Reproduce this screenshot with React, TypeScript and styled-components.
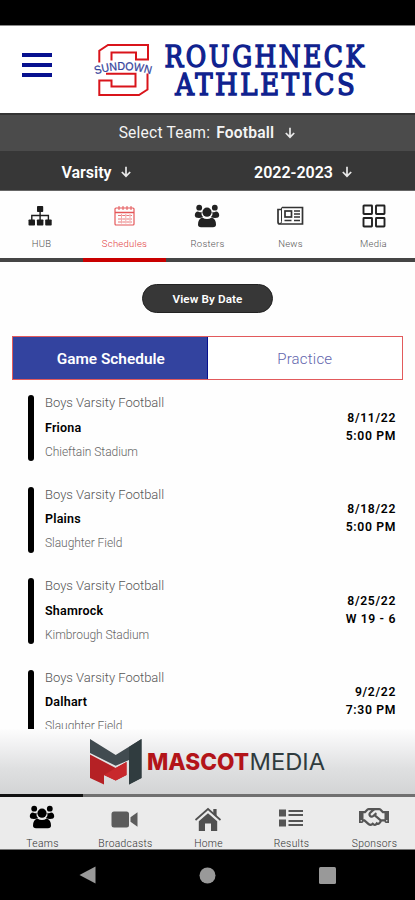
import React from 'react';
import styled, { createGlobalStyle } from 'styled-components';
import { FaRegHandshake } from 'react-icons/fa';

const GlobalStyle = createGlobalStyle`
  * { box-sizing: border-box; }
  body { margin: 0; background: #fff; font-family: Roboto, "Liberation Sans", sans-serif; }
`;

const Screen = styled.div`
  width: 415px;
  height: 900px;
  display: flex;
  flex-direction: column;
  overflow: hidden;
  background: #fefefe;
`;

const StatusBar = styled.div`
  height: 25px;
  flex: none;
  background: #000;
`;

const Header = styled.header`
  height: 88px;
  flex: none;
  display: flex;
  align-items: flex-start;
  background: #fff;
  border-top: 1px solid #8a8a8a;
`;

const MenuButton = styled.button`
  display: flex;
  flex-direction: column;
  gap: 6px;
  width: 30px;
  margin: 27px 42px 0 22px;
  padding: 0;
  border: 0;
  background: none;
`;

const MenuLine = styled.span`
  height: 4px;
  background: #07118f;
`;

const Brand = styled.div`
  display: flex;
  padding-top: 8px;
`;

const TeamBar = styled.div`
  height: 38px;
  flex: none;
  display: flex;
  align-items: center;
  justify-content: center;
  background: #4b4b4b;
  border-top: 2px solid #343434;
  color: #f4f4f4;
  font-size: 15.6px;
  letter-spacing: 0.2px;
`;

const TeamName = styled.b`
  margin: 0 10px 0 6px;
  font-weight: 600;
  letter-spacing: 0.2px;
`;

const FilterBar = styled.div`
  height: 40px;
  flex: none;
  display: grid;
  grid-template-columns: 193px 1fr;
  background: #373737;
  border-bottom: 1px solid #666;
  color: #fff;
`;

const Filter = styled.div<{ $shift?: number }>`
  display: flex;
  align-items: center;
  justify-content: center;
  gap: 8px;
  padding-top: 3px;
  padding-right: ${(p) => p.$shift ?? 0}px;
  font-size: 16px;
  font-weight: 600;
`;

const TabBar = styled.nav`
  height: 71px;
  flex: none;
  display: grid;
  grid-template-columns: repeat(5, 1fr);
  background: #fefefe;
`;

const Tab = styled.div<{ $active?: boolean }>`
  display: flex;
  flex-direction: column;
  align-items: center;
  border-bottom: 4px solid ${(p) => (p.$active ? '#c90000' : '#454545')};
  color: ${(p) => (p.$active ? '#e2393b' : '#555')};
`;

const TabIcon = styled.span<{ $nudge?: number }>`
  height: 46px;
  display: flex;
  align-items: center;
  padding-top: 4px;
  padding-right: ${(p) => p.$nudge ?? 0}px;
  color: #222;
`;

const TabLabel = styled.span`
  font-size: 9.5px;
  line-height: 13px;
  font-weight: 300;
  letter-spacing: 0.25px;
`;

const Content = styled.main`
  height: 467px;
  flex: none;
  overflow: hidden;
  display: flex;
  flex-direction: column;
  align-items: center;
  padding-top: 22px;
`;

const DateButton = styled.button`
  width: 131px;
  height: 29px;
  flex: none;
  padding: 1px 0 0;
  border: 1px solid #222;
  border-radius: 15px;
  background: #373737;
  color: #fff;
  font: 600 11.7px Roboto, sans-serif;
  letter-spacing: 0.1px;
`;

const Segments = styled.div`
  width: 391px;
  height: 44px;
  flex: none;
  margin-top: 23px;
  display: grid;
  grid-template-columns: 1fr 1fr;
  border: 1px solid #e25a5c;
`;

const Segment = styled.div<{ $active?: boolean }>`
  display: flex;
  align-items: center;
  justify-content: center;
  padding-top: 1px;
  padding-left: ${(p) => (p.$active ? 2 : 0)}px;
  font-size: ${(p) => (p.$active ? 15.4 : 15)}px;
  font-weight: ${(p) => (p.$active ? 600 : 300)};
  letter-spacing: ${(p) => (p.$active ? 0 : 0.2)}px;
  color: ${(p) => (p.$active ? '#fff' : '#6265ad')};
  background: ${(p) => (p.$active ? '#33439f' : '#fff')};
  border-right: ${(p) => (p.$active ? '1px solid #07118f' : '0')};
`;

const GameList = styled.div`
  width: 100%;
  margin-top: 15px;
  display: flex;
  flex-direction: column;
  gap: 25.6px;
`;

const GameRow = styled.article`
  height: 66px;
  flex: none;
  display: flex;
  padding: 0 19px 0 28px;
`;

const Accent = styled.span`
  width: 6px;
  margin-right: 11px;
  border-radius: 3px;
  background: #000;
`;

const GameInfo = styled.div`
  flex: 1;
  display: flex;
  flex-direction: column;
`;

const League = styled.span`
  font-size: 13px;
  line-height: 16px;
  font-weight: 300;
  color: #555;
`;

const Opponent = styled.span`
  margin-top: 8.7px;
  font-size: 12.5px;
  line-height: 16px;
  font-weight: 600;
  letter-spacing: 0.2px;
  color: #000;
`;

const Venue = styled.span`
  margin-top: 8px;
  font-size: 12px;
  line-height: 16px;
  font-weight: 300;
  letter-spacing: -0.05px;
  color: #666;
`;

const GameTime = styled.div`
  padding-top: 13.6px;
  text-align: right;
  font-size: 12.2px;
  line-height: 18px;
  font-weight: 600;
  letter-spacing: 0.65px;
  color: #000;
`;

const Banner = styled.div`
  height: 65px;
  flex: none;
  display: flex;
  padding: 9px 0 0 89px;
  background: linear-gradient(#fdfdfd, #f1f1f2 25%, #dfe0e1 60%, #d3d4d5);
`;

const BottomNav = styled.nav`
  height: 56px;
  flex: none;
  display: grid;
  grid-template-columns: repeat(5, 1fr);
  background: #ebebeb;
  border-bottom: 1px solid #777;
`;

const NavItem = styled.div<{ $active?: boolean }>`
  display: flex;
  flex-direction: column;
  align-items: center;
  border-top: 3px solid ${(p) => (p.$active ? '#111' : '#707070')};
  color: ${(p) => (p.$active ? '#000' : '#555')};
`;

const NavIcon = styled.span<{ $top?: number }>`
  height: 40px;
  display: flex;
  align-items: center;
  padding-top: ${(p) => p.$top ?? 2}px;
`;

const NavLabel = styled.span`
  padding-left: 2px;
  font-size: 10.3px;
  line-height: 13px;
  font-weight: 300;
  letter-spacing: 0.3px;
  color: #333;
`;

const SystemBar = styled.div`
  height: 50px;
  flex: none;
  display: flex;
  justify-content: space-between;
  align-items: center;
  padding: 0 79px;
  background: #000;
`;

const ArrowDown = () => (
  <svg width="12" height="12" viewBox="0 0 12 12" fill="none" stroke="#e8e8e8" strokeWidth="1.7">
    <path d="M6 .8V10M1.8 6 6 10.2 10.2 6" />
  </svg>
);

const SchoolLogo = () => (
  <svg width="275" height="70" viewBox="94 34 275 70">
    <g transform="translate(0 12)" fill="none" stroke="#d9141b" strokeWidth="2">
      <path d="M99.3 50.5V38.7L108 33H148V47.5H136V40.5H111.5V48.5" />
      <path d="M106 61.7H135.5V74.5H111.5V68.5H99.3V83H139L147.5 77.5V61.5" />
    </g>
    <path id="arc" d="M95.5 74.5Q123 65.5 151 74.5" fill="none" />
    <text fill="#35439b" fontFamily="Liberation Sans, sans-serif" fontSize="11.5" stroke="#35439b" strokeWidth=".25">
      <textPath href="#arc" textLength="56" lengthAdjust="spacingAndGlyphs">SUNDOWN</textPath>
    </text>
    <g fill="#0f228f" stroke="#0f228f" strokeWidth="1.5" fontFamily="DejaVu Serif, serif" fontWeight="400" fontSize="30.3" letterSpacing="3">
      <text x="164.5" y="66.8" textLength="202" lengthAdjust="spacingAndGlyphs">ROUGHNECK</text>
      <text x="175.3" y="94.6" textLength="182" lengthAdjust="spacingAndGlyphs">ATHLETICS</text>
    </g>
  </svg>
);

const HubIcon = () => (
  <svg width="24" height="22" viewBox="0 0 24 22" fill="#1c1c1c">
    <rect x="9" y="1" width="6.2" height="6" rx=".8" />
    <rect x=".5" y="14.5" width="6.5" height="6" rx=".8" />
    <rect x="8.9" y="14.5" width="6.5" height="6" rx=".8" />
    <rect x="17.2" y="14.5" width="6.5" height="6" rx=".8" />
    <path d="M12.1 6V15M3.8 15V10.5H20.4V15" fill="none" stroke="#1c1c1c" strokeWidth="1.4" />
  </svg>
);

const CalendarIcon = () => (
  <svg width="22" height="22" viewBox="0 0 22 22" fill="none" stroke="#e45759">
    <rect x="1" y="3" width="19" height="17" rx="1" strokeWidth="1.2" />
    <path d="M1 7.5H20" strokeWidth="1.5" />
    <path d="M5 1V5M9 1V5M13 1V5M17 1V5" strokeWidth="1" />
    <path d="M4 10.5H18M4 14H18M4 17H18" strokeDasharray="3 1.2" strokeWidth=".8" />
    <path d="M7.5 9V18.5M11.8 9V18.5M16 9V18.5" strokeWidth=".5" />
  </svg>
);

const PeopleIcon = ({ color }: { color: string }) => (
  <svg width="26" height="24" viewBox="0 0 26 24" fill={color}>
    <circle cx="5.2" cy="3.7" r="2.9" />
    <circle cx="20.8" cy="3.7" r="2.9" />
    <circle cx="13" cy="8.2" r="4.6" />
    <path d="M.8 11.5Q.8 7.8 4 7.5Q6 9 7.5 7.8Q7 11 9 13Q7.5 14 5 14Q1 14 .8 11.5ZM25.2 11.5Q25.2 7.8 22 7.5Q20 9 18.5 7.8Q19 11 17 13Q18.5 14 21 14Q25 14 25.2 11.5Z" />
    <path d="M4 20.5Q4 15 8.3 13.5Q13 16.5 17.7 13.5Q22 15 22 20.5Q22 23.3 19 23.3H7Q4 23.3 4 20.5Z" />
  </svg>
);

const NewsIcon = () => (
  <svg width="27" height="20" viewBox="0 0 27 20" fill="none" stroke="#333">
    <path d="M5 1.5H25.5V18H3Q1 18 1 16V3.5H5" strokeWidth="1.7" />
    <path d="M4.5 1.5V15.5Q4.5 17.7 2.8 17.7" strokeWidth="1" />
    <rect x="8" y="5" width="6.5" height="6" strokeWidth="1.7" />
    <path d="M17 5H23M17 8H23M17 11H23M7.5 14.5H14.5M17 14.5H23" strokeWidth="1.3" />
  </svg>
);

const GridIcon = () => (
  <svg width="24" height="24" viewBox="0 0 24 24" fill="none" stroke="#222" strokeWidth="1.9">
    <rect x="1.5" y="1.5" width="8.5" height="8.5" rx=".5" />
    <rect x="14" y="1.5" width="8.5" height="8.5" rx=".5" />
    <rect x="1.5" y="14" width="8.5" height="8.5" rx=".5" />
    <rect x="14" y="14" width="8.5" height="8.5" rx=".5" />
  </svg>
);

const CameraIcon = () => (
  <svg width="27" height="17" viewBox="0 0 27 17" fill="#5c5c5c">
    <rect x=".5" y=".5" width="17.5" height="16" rx="2.5" />
    <path d="M19.5 6.3 26.5 1.3V15.7L19.5 10.7Z" />
  </svg>
);

const HomeIcon = () => (
  <svg width="28" height="25" viewBox="0 0 28 25">
    <path d="M19.3 2H22.6V10L19.3 7ZM4.8 14.2 14 6.3 23.2 14.2V24H17V16.5H11V24H4.8Z" fill="#505050" />
    <path d="M1.5 13 14 2 26.5 13" fill="none" stroke="#505050" strokeWidth="1.7" />
  </svg>
);

const ResultsIcon = () => (
  <svg width="24" height="18" viewBox="0 0 24 18" fill="#555">
    <path d="M0 .5H7V7.5H0ZM0 10.5H7V17.5H0ZM9.5 1H24V3H9.5ZM9.5 5H24V7H9.5ZM9.5 11H24V13H9.5ZM9.5 15H24V17H9.5Z" />
  </svg>
);

const SponsorLogo = () => (
  <svg width="238" height="50" viewBox="89 738 238 50">
    <path d="M90 739 115.7 755 141.5 739V778L129 784.5V760L115.7 765.8 90 753Z" fill="#414b50" />
    <path d="M141.5 739V778L129 784.5V747Z" fill="#303c3f" />
    <path d="M90 754.5 115.7 768 126.5 762V775L115.7 780.5 104 775V784.5L90 778Z" fill="#b52125" />
    <path d="M115.7 768 126.5 762V775L115.7 780.5 104 775Z" fill="#c8282c" />
    <g fontFamily="Inter, sans-serif" fontSize="22.8">
      <text x="147" y="770.3" fill="#b31419" fontWeight="800" textLength="102" lengthAdjust="spacingAndGlyphs">MASCOT</text>
      <text x="249.5" y="770.3" fill="#2f3b3e" textLength="75.5" lengthAdjust="spacingAndGlyphs">MEDIA</text>
    </g>
  </svg>
);

const games = [
  { opponent: 'Friona', venue: 'Chieftain Stadium', date: '8/11/22', result: '5:00 PM' },
  { opponent: 'Plains', venue: 'Slaughter Field', date: '8/18/22', result: '5:00 PM' },
  { opponent: 'Shamrock', venue: 'Kimbrough Stadium', date: '8/25/22', result: 'W 19 - 6' },
  { opponent: 'Dalhart', venue: 'Slaughter Field', date: '9/2/22', result: '7:30 PM' },
];

const tabs = [
  { label: 'HUB', icon: <HubIcon />, nudge: 3 },
  { label: 'Schedules', icon: <CalendarIcon /> },
  { label: 'Rosters', icon: <PeopleIcon color="#222" />, nudge: 2 },
  { label: 'News', icon: <NewsIcon /> },
  { label: 'Media', icon: <GridIcon /> },
];

const navItems = [
  { label: 'Teams', icon: <PeopleIcon color="#000" />, top: 0 },
  { label: 'Broadcasts', icon: <CameraIcon />, top: 4 },
  { label: 'Home', icon: <HomeIcon />, top: 4 },
  { label: 'Results', icon: <ResultsIcon />, top: 2 },
  { label: 'Sponsors', icon: <FaRegHandshake size={30} />, top: 0 },
];

export default function App() {
  return (
    <>
      <GlobalStyle />
      <Screen>
        <StatusBar />
        <Header>
          <MenuButton aria-label="Menu">
            <MenuLine />
            <MenuLine />
            <MenuLine />
          </MenuButton>
          <Brand>
            <SchoolLogo />
          </Brand>
        </Header>
        <TeamBar>
          Select Team: <TeamName>Football</TeamName>
          <ArrowDown />
        </TeamBar>
        <FilterBar>
          <Filter>Varsity <ArrowDown /></Filter>
          <Filter $shift={1}>2022-2023 <ArrowDown /></Filter>
        </FilterBar>
        <TabBar>
          {tabs.map((t) => (
            <Tab key={t.label} $active={t.label === 'Schedules'}>
              <TabIcon $nudge={t.nudge}>{t.icon}</TabIcon>
              <TabLabel>{t.label}</TabLabel>
            </Tab>
          ))}
        </TabBar>
        <Content>
          <DateButton>View By Date</DateButton>
          <Segments>
            <Segment $active>Game Schedule</Segment>
            <Segment>Practice</Segment>
          </Segments>
          <GameList>
            {games.map((g) => (
              <GameRow key={g.date}>
                <Accent />
                <GameInfo>
                  <League>Boys Varsity Football</League>
                  <Opponent>{g.opponent}</Opponent>
                  <Venue>{g.venue}</Venue>
                </GameInfo>
                <GameTime>
                  <div>{g.date}</div>
                  <div>{g.result}</div>
                </GameTime>
              </GameRow>
            ))}
          </GameList>
        </Content>
        <Banner>
          <SponsorLogo />
        </Banner>
        <BottomNav>
          {navItems.map((n) => (
            <NavItem key={n.label} $active={n.label === 'Teams'}>
              <NavIcon $top={n.top}>{n.icon}</NavIcon>
              <NavLabel>{n.label}</NavLabel>
            </NavItem>
          ))}
        </BottomNav>
        <SystemBar>
          <svg width="17" height="18" viewBox="0 0 17 18"><path d="M16.5 .5V17.5L.5 9Z" fill="#999" /></svg>
          <svg width="17" height="17" viewBox="0 0 17 17"><circle cx="8.5" cy="8.5" r="8" fill="#999" /></svg>
          <svg width="17" height="17" viewBox="0 0 17 17"><rect width="17" height="17" rx="1.5" fill="#999" /></svg>
        </SystemBar>
      </Screen>
    </>
  );
}
